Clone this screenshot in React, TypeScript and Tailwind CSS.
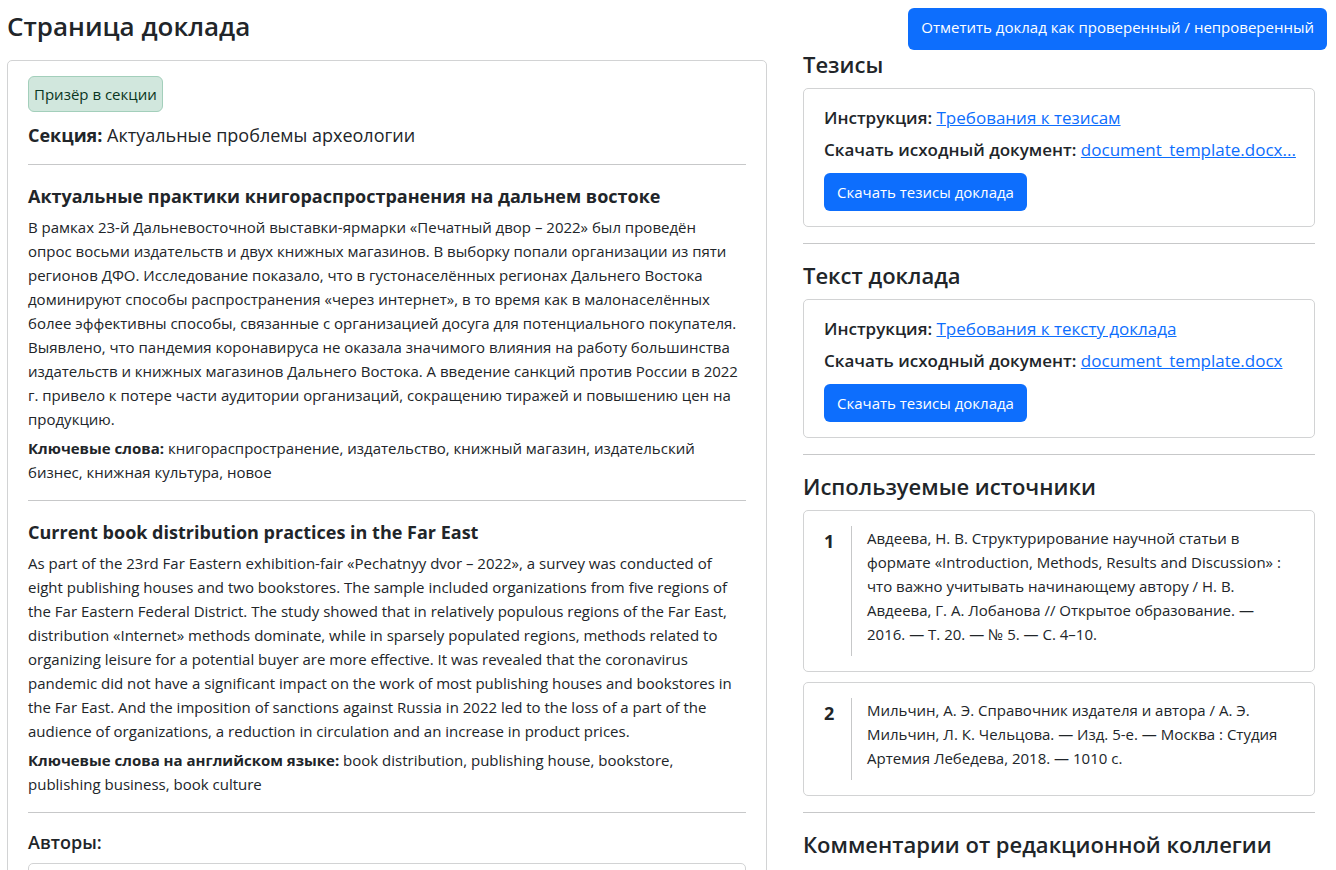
import type { ReactNode } from "react";

const primaryButton =
  "rounded-md bg-[#0d6efd] px-[13px] text-[15px] leading-6 text-white hover:bg-[#0b5ed7] cursor-pointer";

function Card({ className, children }: { className: string; children?: ReactNode }) {
  return <div className={`rounded-[5px] border border-[#d2d3d4] pl-5 ${className}`}>{children}</div>;
}

function SideHeading({ children }: { children: ReactNode }) {
  return <h2 className="mb-2.5 text-[22px] leading-7 font-semibold">{children}</h2>;
}

function Divider({ className }: { className: string }) {
  return <hr className={`border-[#c7c8c9] ${className}`} />;
}

function DocumentCard({ guide, file }: { guide: string; file: string }) {
  return (
    <Card className="pt-[13px] pr-3 pb-[15px] text-[17px] leading-8">
      <p>
        <span className="font-semibold">Инструкция:</span>{" "}
        <a href="#guide" className="text-[#0d6efd] underline">{guide}</a>
      </p>
      <p>
        <span className="font-semibold">Скачать исходный документ:</span>{" "}
        <a href="#template" className="text-[#0d6efd] underline">{file}</a>
      </p>
      <button type="button" className={`mt-[7px] block h-[38px] ${primaryButton}`}>
        Скачать тезисы доклада
      </button>
    </Card>
  );
}

function Article({ title, text, label, words }: { title: string; text: string; label: string; words: string }) {
  return (
    <article className="text-[15px] leading-6">
      <h2 className="mb-1 text-[18px] leading-[30px] font-bold">{title}</h2>
      <p className="mb-[5px] pr-1">{text}</p>
      <p className="pr-1">
        <b>{label}</b> {words}
      </p>
    </article>
  );
}

const sources = [
  "Авдеева, Н. В. Структурирование научной статьи в формате «Introduction, Methods, Results and Discussion» : что важно учитывать начинающему автору / Н. В. Авдеева, Г. А. Лобанова // Открытое образование. — 2016. — Т. 20. — № 5. — С. 4–10.",
  "Мильчин, А. Э. Справочник издателя и автора / А. Э. Мильчин, Л. К. Чельцова. — Изд. 5-е. — Москва : Студия Артемия Лебедева, 2018. — 1010 с.",
];

export default function App() {
  return (
    <div className="h-screen overflow-hidden bg-white font-['Open_Sans','Noto_Sans',sans-serif] text-[#212529]">
      <header className="flex items-start justify-between pt-2 pr-[9px] pl-[7px]">
        <h1 className="text-[26px] leading-9 font-semibold">Страница доклада</h1>
        <button type="button" className={`h-[42px] pb-1 ${primaryButton}`}>
          Отметить доклад как проверенный / непроверенный
        </button>
      </header>
      <div className="grid grid-cols-[95fr_64fr] items-start gap-9 pr-[21px] pl-[7px]">
        <main className="pt-2.5">
          <Card className="py-[15px] pr-5">
            <span className="inline-block h-9 rounded-md border border-[#a3cfbb] bg-[#d1e7dd] px-[5px] align-top text-[15px] leading-[34px] text-[#0a3622]">
              Призёр в секции
            </span>
            <p className="mt-2 text-[18px] leading-[30px]">
              <b>Секция:</b> Актуальные проблемы археологии
            </p>
            <Divider className="mt-3.5 mb-4" />
            <Article
              title="Актуальные практики книгораспространения на дальнем востоке"
              text="В рамках 23-й Дальневосточной выставки-ярмарки «Печатный двор – 2022» был проведён опрос восьми издательств и двух книжных магазинов. В выборку попали организации из пяти регионов ДФО. Исследование показало, что в густонаселённых регионах Дальнего Востока доминируют способы распространения «через интернет», в то время как в малонаселённых более эффективны способы, связанные с организацией досуга для потенциального покупателя. Выявлено, что пандемия коронавируса не оказала значимого влияния на работу большинства издательств и книжных магазинов Дальнего Востока. А введение санкций против России в 2022 г. привело к потере части аудитории организаций, сокращению тиражей и повышению цен на продукцию."
              label="Ключевые слова:"
              words="книгораспространение, издательство, книжный магазин, издательский бизнес, книжная культура, новое"
            />
            <Divider className="my-4" />
            <Article
              title="Current book distribution practices in the Far East"
              text="As part of the 23rd Far Eastern exhibition-fair «Pechatnyy dvor – 2022», a survey was conducted of eight publishing houses and two bookstores. The sample included organizations from five regions of the Far Eastern Federal District. The study showed that in relatively populous regions of the Far East, distribution «Internet» methods dominate, while in sparsely populated regions, methods related to organizing leisure for a potential buyer are more effective. It was revealed that the coronavirus pandemic did not have a significant impact on the work of most publishing houses and bookstores in the Far East. And the imposition of sanctions against Russia in 2022 led to the loss of a part of the audience of organizations, a reduction in circulation and an increase in product prices."
              label="Ключевые слова на английском языке:"
              words="book distribution, publishing house, bookstore, publishing business, book culture"
            />
            <Divider className="my-4" />
            <h2 className="mb-2 text-[18px] leading-[26px] font-semibold">Авторы:</h2>
            <Card className="py-10" />
          </Card>
        </main>
        <aside>
          <SideHeading>Тезисы</SideHeading>
          <DocumentCard guide="Требования к тезисам" file="document_template.docx..." />
          <Divider className="mt-4 mb-[17px]" />
          <SideHeading>Текст доклада</SideHeading>
          <DocumentCard guide="Требования к тексту доклада" file="document_template.docx" />
          <Divider className="mt-4 mb-[17px]" />
          <SideHeading>Используемые источники</SideHeading>
          <ol className="flex flex-col gap-2.5">
            {sources.map((source, index) => (
              <li key={source}>
                <Card className="flex py-[15px] pr-5">
                  <b className="w-[27px] shrink-0 text-[18px] leading-[30px]">{index + 1}</b>
                  <p className="min-w-0 flex-1 border-l border-[#c7c8c9] pb-2.5 pl-[15px] text-[15px] leading-6">
                    {source}
                  </p>
                </Card>
              </li>
            ))}
          </ol>
          <Divider className="mt-4 mb-[17px]" />
          <SideHeading>Комментарии от редакционной коллегии</SideHeading>
        </aside>
      </div>
    </div>
  );
}
